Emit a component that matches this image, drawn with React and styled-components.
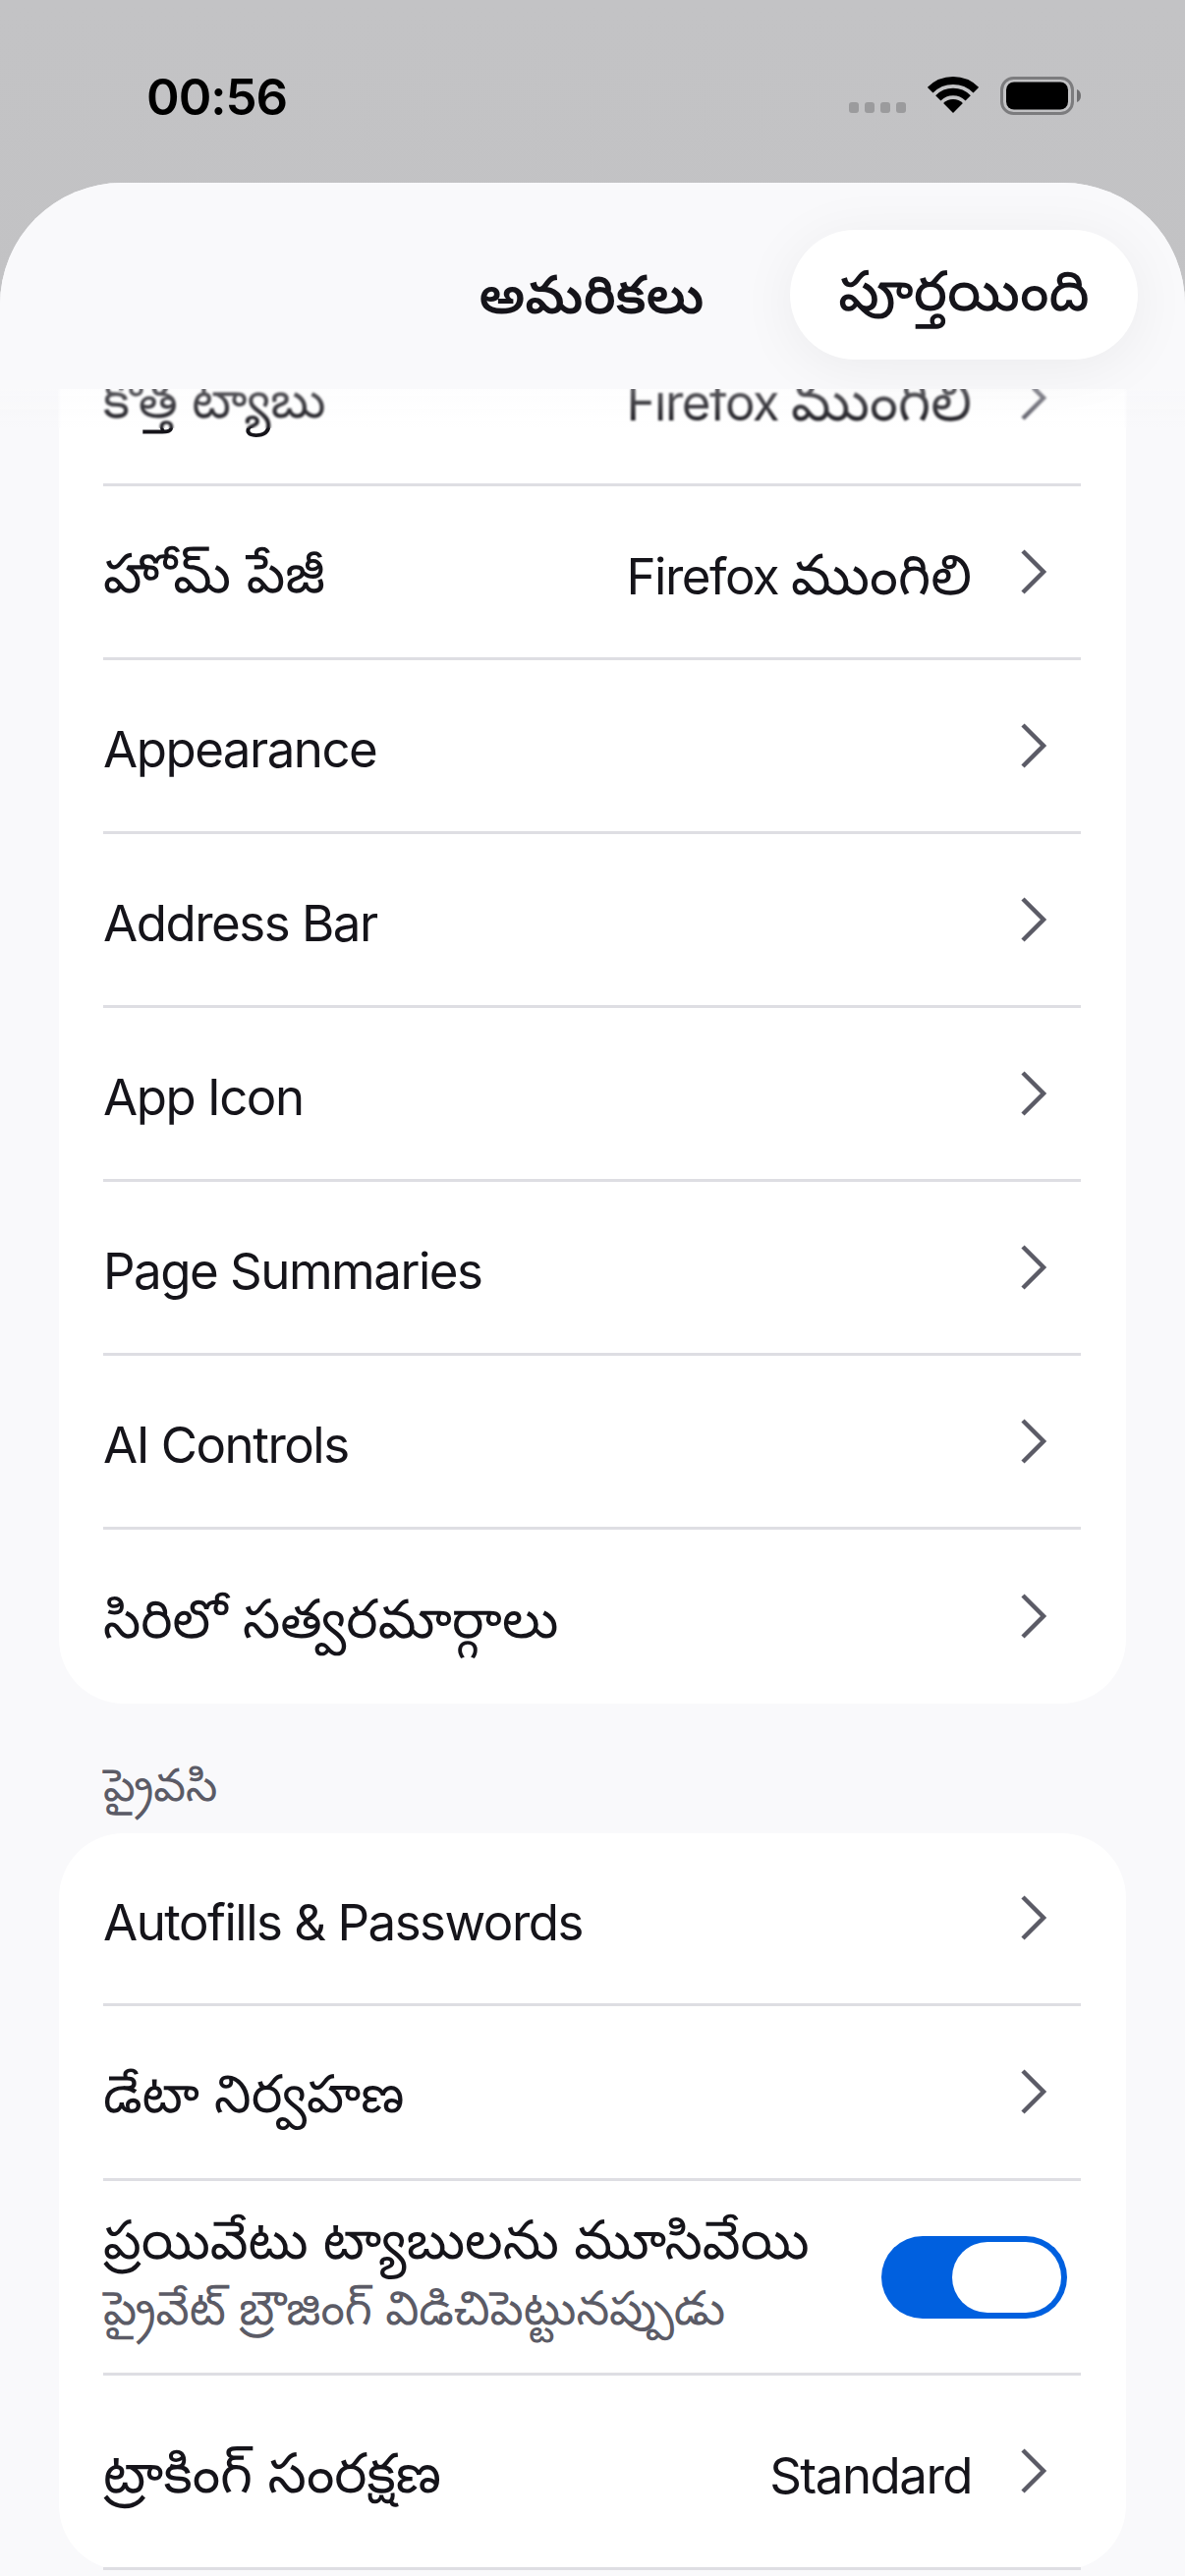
import styled, { createGlobalStyle } from "styled-components";

const GlobalStyle = createGlobalStyle`
  html, body {
    margin: 0;
    padding: 0;
    background: #c0c0c2;
  }
  * { box-sizing: border-box; }
`;

const FONT = `Inter, "Noto Sans Telugu", "Noto Sans", sans-serif`;

const Screen = styled.div`
  width: 1206px;
  height: 2622px;
  overflow: hidden;
  display: flex;
  flex-direction: column;
  font-family: ${FONT};
  background: linear-gradient(#c3c3c5, #bcbcbe);
`;

const StatusBar = styled.div`
  height: 186px;
  flex: none;
  display: flex;
  justify-content: space-between;
  align-items: flex-start;
  padding: 69px 106px 0 149px;
`;

const Clock = styled.div`
  font-size: 51px;
  line-height: 60px;
  font-weight: 600;
  letter-spacing: -1px;
  color: #000;
`;

const StatusIcons = styled.div`
  display: flex;
  align-items: flex-end;
  gap: 22px;
  padding-top: 9px;
`;

const Sheet = styled.div`
  flex: 1;
  min-height: 0;
  display: flex;
  flex-direction: column;
  background: #f9f9fb;
  border-radius: 124px 124px 0 0;
  position: relative;
`;

const Header = styled.div`
  height: 210px;
  flex: none;
  position: relative;
  z-index: 2;
  background: #f9f9fb;
  border-radius: 124px 124px 0 0;
  display: flex;
  align-items: center;
  justify-content: center;
`;

const Title = styled.div`
  font-size: 54px;
  font-weight: 600;
  color: #15141a;
  margin-top: 30px;
  margin-right: 2px;
`;

const DoneButton = styled.div`
  position: absolute;
  top: 48px;
  right: 48px;
  width: 354px;
  height: 132px;
  border-radius: 66px;
  background: #fff;
  box-shadow: 0 8px 60px rgba(0, 0, 0, 0.06);
  display: flex;
  align-items: center;
  justify-content: center;
  font-size: 57px;
  font-weight: 500;
  color: #15141a;
  padding-top: 4px;
`;

const Scroll = styled.div`
  flex: 1;
  min-height: 0;
  overflow: hidden;
  position: relative;
  padding: 0 60px;
`;

const Fade = styled.div`
  position: absolute;
  top: 0;
  left: 0;
  right: 0;
  height: 40px;
  backdrop-filter: blur(1px);
  background: linear-gradient(rgba(249, 249, 251, 0.3), rgba(249, 249, 251, 0));
`;

const Card = styled.div`
  background: #fff;
  border-radius: 66px;
  padding-left: 45px;
  padding-right: 46px;
  margin-top: ${(p) => p.$top || 0}px;
`;

const SectionLabel = styled.div`
  font-size: 46px;
  line-height: 60px;
  color: #5b5b66;
  padding: 52px 0 20px 45px;
`;

const Row = styled.div`
  height: ${(p) => p.$height || 177}px;
  display: flex;
  align-items: center;
  border-bottom: ${(p) => (p.$last ? "none" : "3px solid #dedee3")};
`;

const RowText = styled.div`
  flex: 1;
  min-width: 0;
`;

const Label = styled.div`
  font-size: ${(p) => (p.$size ? p.$size : p.$te ? 54.5 : 51)}px;
  letter-spacing: ${(p) => (p.$te ? "0" : "-1.5px")};
  line-height: 72px;
  color: #15141a;
  white-space: nowrap;
  margin-top: ${(p) => (p.$two ? 0 : p.$te ? 2 : 8)}px;
`;

const SubLabel = styled.div`
  font-size: 48px;
  line-height: 68px;
  color: #5b5b66;
  white-space: nowrap;
  margin-bottom: 10px;
`;

const Value = styled.div`
  font-size: 51px;
  line-height: 72px;
  letter-spacing: -1.5px;
  color: #15141a;
  margin: 8px 48px 0 0;
  white-space: nowrap;
`;

const Te = styled.span`
  font-size: 57px;
  letter-spacing: 0;
`;

const ChevronBox = styled.svg`
  width: 30px;
  height: 48px;
  flex: none;
  margin-right: 33px;
  margin-top: -1px;
`;

const Toggle = styled.div`
  width: 189px;
  height: 84px;
  flex: none;
  margin-right: 14px;
  border-radius: 42px;
  background: #0060df;
  padding: 6px;
  display: flex;
  justify-content: flex-end;
`;

const Thumb = styled.div`
  width: 111px;
  height: 72px;
  border-radius: 36px;
  background: #fff;
`;

const Chevron = () => (
  <ChevronBox viewBox="0 0 30 48">
    <path d="M4 3 L25 24 L4 45" fill="none" stroke="#5b5b66" strokeWidth="4.5" />
  </ChevronBox>
);

const Signal = () => (
  <svg width="58" height="11" viewBox="0 0 58 11" style={{ marginBottom: 3 }}>
    {[0, 16, 32, 48].map((x) => (
      <rect key={x} x={x} y="0" width="10" height="11" rx="3" fill="#9b9b9d" />
    ))}
  </svg>
);

const Wifi = () => (
  <svg width="52" height="38" viewBox="0 0 52 38" style={{ marginBottom: 2 }}>
    <path d="M2.67 13.67 A33 33 0 0 1 49.33 13.67" fill="none" stroke="#000" strokeWidth="8" />
    <path d="M10.8 21.8 A21.5 21.5 0 0 1 41.2 21.8" fill="none" stroke="#000" strokeWidth="7.5" />
    <path d="M16.1 27.1 A14 14 0 0 1 35.9 27.1 L26 37 Z" fill="#000" />
  </svg>
);

const Battery = () => (
  <svg width="82" height="40" viewBox="0 0 82 40">
    <rect x="1.5" y="1.5" width="72" height="36" rx="12" fill="none" stroke="#7c7c7e" strokeWidth="3" />
    <rect x="6" y="5.5" width="63" height="28" rx="8" fill="#000" />
    <path d="M78 13 C81 14 82 17 82 19.5 C82 22 81 25 78 26 Z" fill="#6f6f71" />
  </svg>
);

const general = [
  { label: "కొత్త ట్యాబు", te: true, home: true, size: 51.5 },
  { label: "హోమ్ పేజీ", te: true, home: true, size: 55.5 },
  { label: "Appearance" },
  { label: "Address Bar" },
  { label: "App Icon" },
  { label: "Page Summaries" },
  { label: "AI Controls" },
  { label: "సిరిలో సత్వరమార్గాలు", te: true, last: true },
];

const App = () => {
  return (
    <Screen>
      <GlobalStyle />
      <StatusBar>
        <Clock>00:56</Clock>
        <StatusIcons>
          <Signal />
          <Wifi />
          <Battery />
        </StatusIcons>
      </StatusBar>
      <Sheet>
        <Header>
          <Title>అమరికలు</Title>
          <DoneButton>పూర్తయింది</DoneButton>
        </Header>
        <Scroll>
          <Card $top={-78}>
            {general.map((row) => (
              <Row key={row.label} $last={row.last}>
                <RowText>
                  <Label $te={row.te} $size={row.size}>{row.label}</Label>
                </RowText>
                {row.home && (
                  <Value>
                    Firefox <Te>ముంగిలి</Te>
                  </Value>
                )}
                <Chevron />
              </Row>
            ))}
          </Card>
          <SectionLabel>ప్రైవసి</SectionLabel>
          <Card>
            <Row $height={176}>
              <RowText>
                <Label>Autofills &amp; Passwords</Label>
              </RowText>
              <Chevron />
            </Row>
            <Row $height={178}>
              <RowText>
                <Label $te $size={53.5}>డేటా నిర్వహణ</Label>
              </RowText>
              <Chevron />
            </Row>
            <Row $height={198}>
              <RowText>
                <Label $te $two>ప్రయివేటు ట్యాబులను మూసివేయి</Label>
                <SubLabel>ప్రైవేట్ బ్రౌజింగ్ విడిచిపెట్టునప్పుడు</SubLabel>
              </RowText>
              <Toggle>
                <Thumb />
              </Toggle>
            </Row>
            <Row $height={198}>
              <RowText>
                <Label $te $size={56}>ట్రాకింగ్ సంరక్షణ</Label>
              </RowText>
              <Value>Standard</Value>
              <Chevron />
            </Row>
          </Card>
          <Fade />
        </Scroll>
      </Sheet>
    </Screen>
  );
};

export default App;
